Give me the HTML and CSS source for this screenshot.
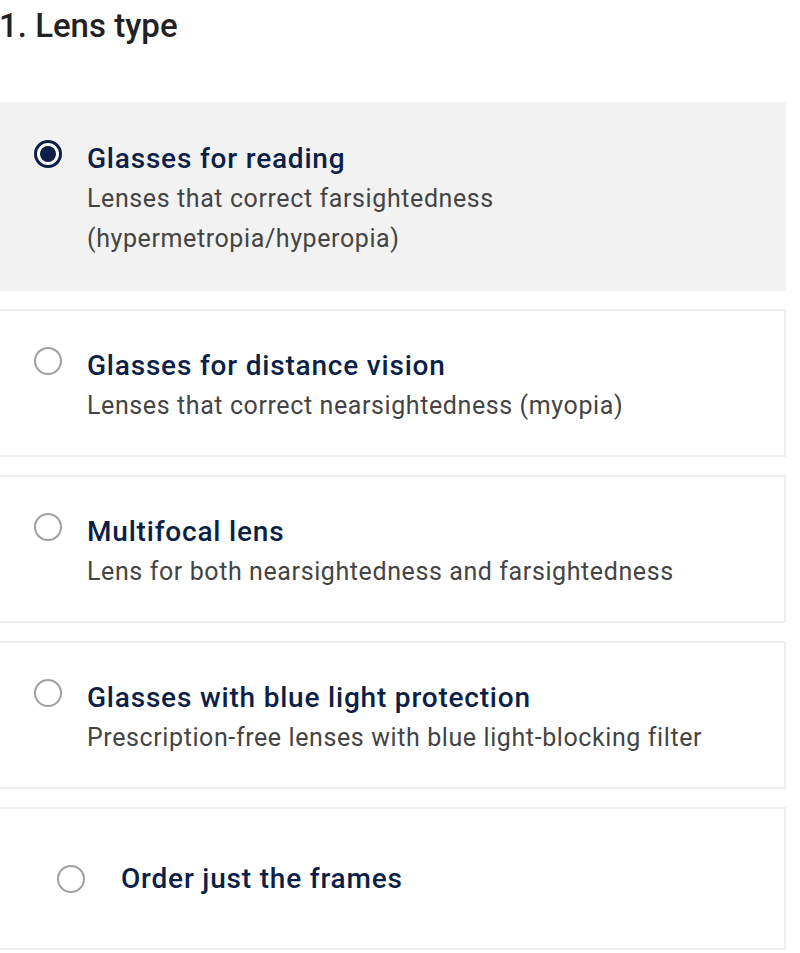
FILE: index.html
```html
<!DOCTYPE html>
<html lang="en">
<head>
<meta charset="utf-8">
<title>Lens type</title>
<link rel="stylesheet" href="styles.css">
</head>
<body>
<div class="page">
  <h2 class="heading">1. Lens type</h2>
  <div class="options">
    <label class="option selected">
      <span class="radio checked"></span>
      <span class="text">
        <span class="name">Glasses for reading</span>
        <span class="desc">Lenses that correct farsightedness (hypermetropia/hyperopia)</span>
      </span>
    </label>
    <label class="option">
      <span class="radio"></span>
      <span class="text">
        <span class="name">Glasses for distance vision</span>
        <span class="desc">Lenses that correct nearsightedness (myopia)</span>
      </span>
    </label>
    <label class="option">
      <span class="radio"></span>
      <span class="text">
        <span class="name">Multifocal lens</span>
        <span class="desc">Lens for both nearsightedness and farsightedness</span>
      </span>
    </label>
    <label class="option">
      <span class="radio"></span>
      <span class="text">
        <span class="name">Glasses with blue light protection</span>
        <span class="desc">Prescription-free lenses with blue light-blocking filter</span>
      </span>
    </label>
    <label class="option frames">
      <span class="radio"></span>
      <span class="text">
        <span class="name">Order just the frames</span>
      </span>
    </label>
  </div>
</div>
</body>
</html>
```
FILE: styles.css
```css
html, body {
  margin: 0;
  padding: 0;
  background: #ffffff;
}
body {
  font-family: Roboto, "Noto Sans", sans-serif;
  overflow: hidden;
}
.page {
  margin-left: -20px;
  width: 806px;
}
.heading {
  margin: 0 0 0 19px;
  padding-top: 6px;
  height: 102px;
  box-sizing: border-box;
  font-size: 33px;
  line-height: 40px;
  font-weight: 500;
  color: #222222;
}
.options {
  display: flex;
  flex-direction: column;
  gap: 18px;
}
.option {
  display: flex;
  align-items: flex-start;
  gap: 25px;
  border: 2px solid #eeeeee;
  padding: 35px 20px 29px 52px;
  min-height: 148px;
  box-sizing: border-box;
  background: #ffffff;
}
.option.selected {
  background: #f2f2f2;
  border-color: #f2f2f2;
  min-height: 189px;
}
.option.frames {
  align-items: center;
  padding-left: 75px;
  padding-top: 20px;
  padding-bottom: 20px;
  gap: 36px;
  min-height: 143px;
}
.radio {
  flex: 0 0 auto;
  width: 28px;
  height: 28px;
  box-sizing: border-box;
  border: 2px solid #a0a0a0;
  border-radius: 50%;
  background: #ffffff;
  margin-top: 1px;
  display: flex;
  align-items: center;
  justify-content: center;
}
.option.frames .radio {
  margin-top: 0;
}
.radio.checked {
  border: 3px solid #0c1f47;
  background: #ffffff;
}
.radio.checked::after {
  content: "";
  width: 16px;
  height: 16px;
  border-radius: 50%;
  background: #0c1f47;
}
.text {
  display: flex;
  flex-direction: column;
}
.name {
  font-size: 28px;
  line-height: 40px;
  font-weight: 500;
  letter-spacing: 0.8px;
  color: #0c1f47;
}
.desc {
  font-size: 25px;
  line-height: 40px;
  letter-spacing: 0.6px;
  color: #444444;
  max-width: 450px;
}
.option:not(.selected) .desc {
  max-width: none;
}
```
